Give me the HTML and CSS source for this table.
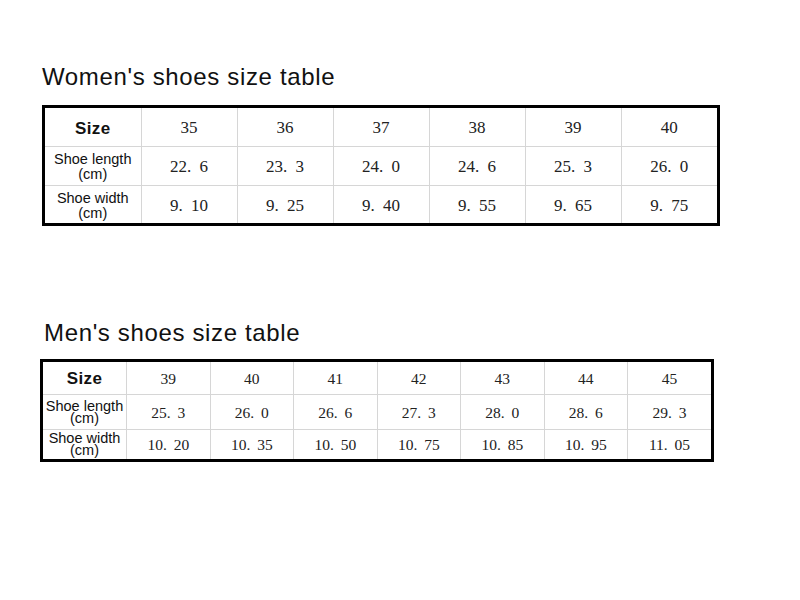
FILE: index.html
```html
<!DOCTYPE html>
<html lang="en">
<head>
<meta charset="utf-8">
<title>Shoes size table</title>
<link rel="stylesheet" href="styles.css">
</head>
<body>
<section class="chart women">
  <h2 class="chart-title">Women's shoes size table</h2>
  <div class="frame">
    <table class="sizes">
      <tr class="r-head">
        <th class="lbl size">Size</th>
        <td>35</td><td>36</td><td>37</td><td>38</td><td>39</td><td>40</td>
      </tr>
      <tr class="r-len">
        <th class="lbl">Shoe length<br>(cm)</th>
        <td>22. 6</td><td>23. 3</td><td>24. 0</td><td>24. 6</td><td>25. 3</td><td>26. 0</td>
      </tr>
      <tr class="r-wid">
        <th class="lbl">Shoe width<br>(cm)</th>
        <td>9. 10</td><td>9. 25</td><td>9. 40</td><td>9. 55</td><td>9. 65</td><td>9. 75</td>
      </tr>
    </table>
  </div>
</section>
<section class="chart men">
  <h2 class="chart-title">Men's shoes size table</h2>
  <div class="frame">
    <table class="sizes">
      <tr class="r-head">
        <th class="lbl size">Size</th>
        <td>39</td><td>40</td><td>41</td><td>42</td><td>43</td><td>44</td><td>45</td>
      </tr>
      <tr class="r-len">
        <th class="lbl">Shoe length<br>(cm)</th>
        <td>25. 3</td><td>26. 0</td><td>26. 6</td><td>27. 3</td><td>28. 0</td><td>28. 6</td><td>29. 3</td>
      </tr>
      <tr class="r-wid">
        <th class="lbl">Shoe width<br>(cm)</th>
        <td>10. 20</td><td>10. 35</td><td>10. 50</td><td>10. 75</td><td>10. 85</td><td>10. 95</td><td>11. 05</td>
      </tr>
    </table>
  </div>
</section>
</body>
</html>
```
FILE: styles.css
```css
html, body {
  margin: 0;
  padding: 0;
  background: #fff;
}
body {
  width: 800px;
  height: 600px;
  overflow: hidden;
  font-family: "Liberation Sans", Arial, sans-serif;
  color: #111;
}
.chart-title {
  margin: 0;
  font-weight: normal;
  font-size: 24px;
  line-height: 28px;
  letter-spacing: 0.65px;
  color: #111;
}
.frame {
  border: 3px solid #000;
  display: inline-block;
  vertical-align: top;
}
.sizes {
  border-collapse: collapse;
  border-style: hidden;
  table-layout: fixed;
}
.sizes td, .sizes th {
  border: 1px solid #d6d6d6;
  padding: 0;
  text-align: center;
  vertical-align: middle;
}
.sizes td {
  font-family: "Liberation Serif", "Times New Roman", serif;
  color: #222;
}
.lbl {
  font-family: "Liberation Sans", Arial, sans-serif;
  font-weight: normal;
  font-size: 14.5px;
  color: #111;
}
.lbl.size {
  font-weight: bold;
  font-size: 17px;
  letter-spacing: 0.4px;
  padding-top: 3px;
}

/* Women's chart */
.women {
  padding: 63px 0 0 42px;
}
.women .chart-title {
  margin-bottom: 14px;
}
.women .sizes {
  width: 672px;
}
.women .sizes td {
  font-size: 17px;
  word-spacing: 4px;
  padding-top: 3px;
}
.women .r-head { height: 38px; }
.women .r-len { height: 39px; }
.women .r-wid { height: 38px; }
.women .lbl { line-height: 15px; padding-top: 3px; }

/* Men's chart */
.men {
  padding: 93px 0 0 40px;
}
.men .chart-title {
  margin: 0 0 12px 4px;
}
.men .sizes {
  width: 668px;
}
.men .sizes td {
  font-size: 15.5px;
  word-spacing: 3px;
  padding-top: 2px;
}
.men .r-head { height: 32px; }
.men .r-len { height: 35px; }
.men .r-wid { height: 30px; }
.men .lbl { line-height: 12px; }
```
